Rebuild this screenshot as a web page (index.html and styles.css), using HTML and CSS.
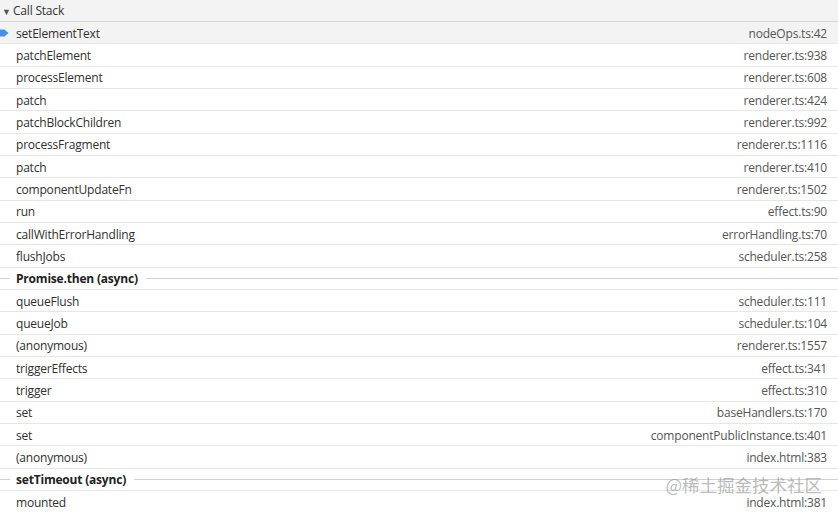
FILE: index.html
```html
<!DOCTYPE html>
<html>
<head>
<meta charset="utf-8">
<link rel="stylesheet" href="styles.css">
</head>
<body>
<div class="panel">
  <div class="header"><span class="tri">&#9660;</span><span class="title">Call Stack</span></div>
  <div class="list">
    <div class="row selected"><svg class="arrow" width="9" height="10" viewBox="0 0 9 10"><path d="M0 1.5h4.5L8.5 5L4.5 8.5H0z" fill="#4a8fe7"/></svg><span class="fn">setElementText</span><span class="loc">nodeOps.ts:42</span></div>
    <div class="row"><span class="fn">patchElement</span><span class="loc">renderer.ts:938</span></div>
    <div class="row"><span class="fn">processElement</span><span class="loc">renderer.ts:608</span></div>
    <div class="row"><span class="fn">patch</span><span class="loc">renderer.ts:424</span></div>
    <div class="row"><span class="fn">patchBlockChildren</span><span class="loc">renderer.ts:992</span></div>
    <div class="row"><span class="fn">processFragment</span><span class="loc">renderer.ts:1116</span></div>
    <div class="row"><span class="fn">patch</span><span class="loc">renderer.ts:410</span></div>
    <div class="row"><span class="fn">componentUpdateFn</span><span class="loc">renderer.ts:1502</span></div>
    <div class="row"><span class="fn">run</span><span class="loc">effect.ts:90</span></div>
    <div class="row"><span class="fn">callWithErrorHandling</span><span class="loc">errorHandling.ts:70</span></div>
    <div class="row"><span class="fn">flushJobs</span><span class="loc">scheduler.ts:258</span></div>
    <div class="row async"><span class="label">Promise.then (async)</span></div>
    <div class="row"><span class="fn">queueFlush</span><span class="loc">scheduler.ts:111</span></div>
    <div class="row"><span class="fn">queueJob</span><span class="loc">scheduler.ts:104</span></div>
    <div class="row"><span class="fn">(anonymous)</span><span class="loc">renderer.ts:1557</span></div>
    <div class="row"><span class="fn">triggerEffects</span><span class="loc">effect.ts:341</span></div>
    <div class="row"><span class="fn">trigger</span><span class="loc">effect.ts:310</span></div>
    <div class="row"><span class="fn">set</span><span class="loc">baseHandlers.ts:170</span></div>
    <div class="row"><span class="fn">set</span><span class="loc">componentPublicInstance.ts:401</span></div>
    <div class="row"><span class="fn">(anonymous)</span><span class="loc">index.html:383</span></div>
    <div class="row async"><span class="label">setTimeout (async)</span></div>
    <div class="row"><span class="fn">mounted</span><span class="loc">index.html:381</span></div>
  </div>
  <div class="watermark">@稀土掘金技术社区</div>
</div>
</body>
</html>
```
FILE: styles.css
```css
html, body {
  margin: 0;
  padding: 0;
  background: #ffffff;
}
body {
  font-family: "Open Sans", "Noto Sans", "Liberation Sans", "Noto Sans CJK SC", sans-serif;
  font-size: 12px;
  letter-spacing: -0.2px;
  color: #303030;
  width: 838px;
  height: 512px;
  overflow: hidden;
}
.panel {
  position: relative;
  width: 838px;
  height: 512px;
  overflow: hidden;
}
.header {
  display: flex;
  align-items: center;
  height: 21px;
  background: #f3f3f3;
  border-bottom: 1px solid #d6d6d6;
  color: #333;
}
.tri {
  font-size: 9px;
  color: #555;
  margin-left: 2px;
  width: 11px;
  padding-top: 1px;
}
.title {
  font-size: 12px;
}
.list {
  display: flex;
  flex-direction: column;
}
.row {
  position: relative;
  display: flex;
  align-items: center;
  justify-content: space-between;
  box-sizing: border-box;
  height: 22.33px;
  border-bottom: 1px solid #e6e6e6;
  padding: 1px 11px 0 16px;
}
.row.selected {
  background: #f3f3f3;
}
.arrow {
  position: absolute;
  left: 0;
  top: 6px;
}
.fn {
  color: #303030;
}
.loc {
  color: #555555;
}
.row.async {
  justify-content: flex-start;
  padding: 1px 0 0 0;
}
.row.async::before {
  content: "";
  width: 10px;
  height: 1px;
  background: #d0d0d0;
  margin-right: 6px;
}
.row.async::after {
  content: "";
  flex: 1;
  height: 1px;
  background: #d0d0d0;
  margin-left: 8px;
}
.label {
  font-weight: bold;
  color: #222;
}
.watermark {
  position: absolute;
  right: 16px;
  top: 475px;
  font-size: 17.5px;
  line-height: 20px;
  color: rgba(120, 120, 120, 0.5);
  font-family: "Noto Sans CJK SC", "Noto Sans", sans-serif;
  letter-spacing: 0px;
}
```
